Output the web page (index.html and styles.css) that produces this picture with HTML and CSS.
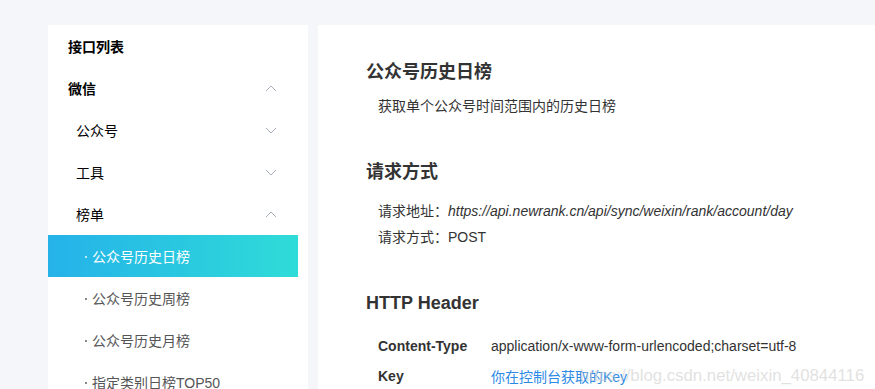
FILE: index.html
```html
<!DOCTYPE html>
<html>
  <head>
    <meta charset="utf-8" />
    <title>公众号历史日榜</title>
    <link rel="stylesheet" href="styles.css">
  </head>

  <body>
    <div class="page">
      <div class="sidebar">
        <div class="nav-title">接口列表</div>
        <div class="nav-group">
          <span>微信</span>
          <svg class="arrow" width="12" height="7" viewBox="0 0 12 7"><path d="M1 6 L6 1 L11 6" /></svg>
        </div>
        <div class="nav-sub">
          <span>公众号</span>
          <svg class="arrow" width="12" height="7" viewBox="0 0 12 7"><path d="M1 1 L6 6 L11 1" /></svg>
        </div>
        <div class="nav-sub">
          <span>工具</span>
          <svg class="arrow" width="12" height="7" viewBox="0 0 12 7"><path d="M1 1 L6 6 L11 1" /></svg>
        </div>
        <div class="nav-sub">
          <span>榜单</span>
          <svg class="arrow" width="12" height="7" viewBox="0 0 12 7"><path d="M1 6 L6 1 L11 6" /></svg>
        </div>
        <div class="nav-item active"><span class="dot"></span>公众号历史日榜</div>
        <div class="nav-item"><span class="dot"></span>公众号历史周榜</div>
        <div class="nav-item"><span class="dot"></span>公众号历史月榜</div>
        <div class="nav-item"><span class="dot"></span>指定类别日榜TOP50</div>
      </div>

      <div class="main">
        <h2 class="first">公众号历史日榜</h2>
        <p class="desc">获取单个公众号时间范围内的历史日榜</p>

        <h2>请求方式</h2>
        <p class="line">请求地址：<em>https://api.newrank.cn/api/sync/weixin/rank/account/day</em></p>
        <p class="line">请求方式：POST</p>

        <h2>HTTP Header</h2>
        <div class="header-row">
          <span class="key">Content-Type</span>
          <span>application/x-www-form-urlencoded;charset=utf-8</span>
        </div>
        <div class="header-row">
          <span class="key">Key</span>
          <span class="link">你在控制台获取的Key</span>
        </div>

        <div class="watermark">https://blog.csdn.net/weixin_40844116</div>
      </div>
    </div>
  </body>
</html>
```

FILE: styles.css
```css
html,
body {
  margin: 0;
  padding: 0;
  height: 100%;
  overflow: hidden;
}

body {
  background-color: #f5f6fa;
  font-family: "Liberation Sans", "Noto Sans CJK SC", sans-serif;
  font-size: 14px;
  color: #333333;
}

.page {
  display: flex;
  gap: 10px;
  padding: 25px 0 0 48px;
  height: 100%;
  box-sizing: border-box;
}

.sidebar {
  width: 260px;
  flex-shrink: 0;
  background-color: #ffffff;
  padding-right: 10px;
  box-sizing: border-box;
}

.nav-title,
.nav-group,
.nav-sub,
.nav-item {
  height: 42px;
  display: flex;
  align-items: center;
  justify-content: space-between;
  color: #000000;
}

.nav-title {
  padding-left: 20px;
  font-weight: bold;
}

.nav-group {
  padding: 0 21px 0 20px;
  font-weight: bold;
}

.nav-sub {
  padding: 0 21px 0 28px;
}

.nav-item {
  padding-left: 37px;
  color: #555555;
  justify-content: flex-start;
}

.nav-item .dot {
  width: 2px;
  height: 2px;
  margin: 2px 5px 0 0;
  background-color: currentColor;
  opacity: 0.7;
}

.nav-item.active {
  color: #ffffff;
  background: linear-gradient(90deg, #25b2e9 0%, #2fdcd8 100%);
}

.arrow path {
  fill: none;
  stroke: #a9b0bd;
  stroke-width: 1;
}

.main {
  position: relative;
  flex: 1;
  background-color: #ffffff;
  padding: 35px 48px;
}

.main h2 {
  font-size: 18px;
  line-height: 24px;
  font-weight: bold;
  color: #333333;
  margin: 41px 0 14px 0;
}

.main h2.first {
  margin-top: 0;
  margin-bottom: 9px;
}

.main p {
  margin: 0;
  padding-left: 12px;
  line-height: 26px;
}

.header-row {
  display: flex;
  height: 30px;
  align-items: center;
  padding-left: 12px;
}

.main h2 + .header-row {
  margin-top: 16px;
}

.header-row .key {
  width: 113px;
  font-weight: bold;
}

.header-row .link {
  color: #2b8ae6;
}

.watermark {
  position: absolute;
  left: 262px;
  top: 341px;
  font-size: 16.8px;
  line-height: 19px;
  color: rgba(200, 200, 200, 0.55);
  white-space: nowrap;
}
```
